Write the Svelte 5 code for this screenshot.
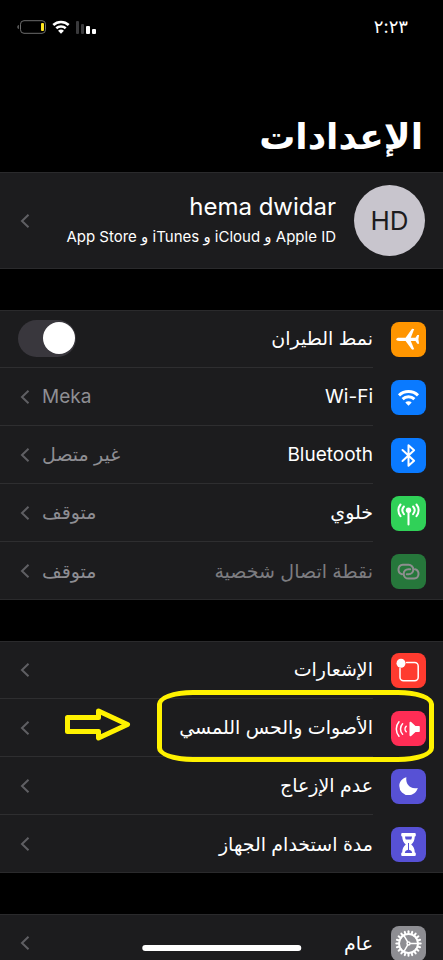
<script lang="ts">
  type Row = {
    icon: string
    label: string
    color: string
    value?: string
    toggle?: boolean
    dimmed?: boolean
    marked?: boolean
  }

  const groups: Row[][] = [
    [
      { icon: 'plane', label: 'نمط الطيران', color: 'orange', toggle: true },
      { icon: 'wifi', label: 'Wi-Fi', color: 'blue', value: 'Meka' },
      { icon: 'bluetooth', label: 'Bluetooth', color: 'blue', value: 'غير متصل' },
      { icon: 'cellular', label: 'خلوي', color: 'green', value: 'متوقف' },
      { icon: 'hotspot', label: 'نقطة اتصال شخصية', color: 'green', value: 'متوقف', dimmed: true },
    ],
    [
      { icon: 'notifications', label: 'الإشعارات', color: 'red' },
      { icon: 'sounds', label: 'الأصوات والحس اللمسي', color: 'pink', marked: true },
      { icon: 'moon', label: 'عدم الإزعاج', color: 'indigo' },
      { icon: 'hourglass', label: 'مدة استخدام الجهاز', color: 'indigo' },
    ],
    [{ icon: 'gear', label: 'عام', color: 'gray' }],
  ]

  let airplane = $state(false)

  const teeth = Array.from({ length: 20 }, (_, i) => i * 18)
</script>

{#snippet chevron()}
  <svg class="chevron" viewBox="0 0 10 16" aria-hidden="true">
    <path d="M8.5 1.8 2 8l6.5 6.2" />
  </svg>
{/snippet}

{#snippet glyph(name: string)}
  <svg viewBox="0 0 35 35" aria-hidden="true">
    {#if name === 'plane'}
      <path class="fill" d="M5.2 17.3c0-.9 1.2-1.6 3-1.6h6.4l6.1-8.4c.3-.4.7-.5 1.1-.4l1.400.2-3.400 8.600h4.700l1.800-2.800h1.800l-.7 4.400.7 4.400h-1.800l-1.800-2.800h-4.700l3.400 8.400-1.400.3c-.4.1-.8 0-1.100-.4l-6.100-8.300H8.200c-1.800 0-3-.7-3-1.600z" />
    {:else if name === 'wifi'}
      <path class="line thick" d="M8 15.3a13.800 13.800 0 0 1 19 0M11.600 19.200a8.500 8.500 0 0 1 11.800 0" />
      <path class="fill" d="M17.500 25.800l-3.200-3.300a4.500 4.500 0 0 1 6.400 0z" />
    {:else if name === 'bluetooth'}
      <path class="line" d="m11.500 12 11.600 10.700-5.600 5.100V7.200l5.600 5.100L11.500 23" />
    {:else if name === 'cellular'}
      <circle class="fill" cx="17.5" cy="14.3" r="2.7" />
      <path class="line" d="M17.500 15v13.500M12.900 10.500a6 6 0 0 0 0 7.700M22.100 10.500a6 6 0 0 1 0 7.700M9.500 8.500a9.200 9.200 0 0 0 0 11.700M25.500 8.500a9.200 9.200 0 0 1 0 11.700" />
    {:else if name === 'hotspot'}
      <path class="line" d="M11 20.200a4.800 4.800 0 0 1 .8-9.400h5.800a4.700 4.700 0 0 1 0 9.400h-1.800M24 15.200a4.800 4.800 0 0 1-.8 9.400h-5.800a4.700 4.700 0 0 1 0-9.400h1.800" />
    {:else if name === 'notifications'}
      <path class="line thin" d="M15.500 9.500h8.200a3.500 3.500 0 0 1 3.500 3.500v11.200a3.500 3.500 0 0 1-3.500 3.500H12.500A3.500 3.500 0 0 1 9 24.200V15.500" />
      <circle class="fill" cx="10" cy="10.2" r="4.5" />
    {:else if name === 'sounds'}
      <path class="fill" d="M18.500 11.800c0-1.100 1-1.400 1.700-.7l4.300 3.900h3.300c.6 0 1 .4 1 1v4c0 .6-.4 1-1 1h-3.300l-4.300 3.900c-.7.7-1.700.4-1.700-.7z" />
      <path class="line thin" d="M15.200 15.200a4 4 0 0 0 0 5.600M11.600 12.800a7.500 7.500 0 0 0 0 10.400M8 10.800a11 11 0 0 0 0 14.400" />
    {:else if name === 'moon'}
      <path class="fill" d="M15.400 8.200c-1.200 6.200 3.500 12.600 11.400 10.700-1.200 4.400-5 7.200-9.300 7.200a9.200 9.200 0 0 1-9.200-9.200c0-4 2.700-7.600 7.100-8.700z" />
    {:else if name === 'hourglass'}
      <path class="fill" d="M11.500 6h12c.8 0 1.300.5 1.300 1.300v1.200c0 .6-.4 1-1 1.100-.2 3.700-1.300 6-3.600 7.900 2.300 1.900 3.400 4.200 3.600 7.900.6.1 1 .5 1 1.100v1.200c0 .8-.5 1.300-1.300 1.300h-12c-.8 0-1.300-.5-1.300-1.300v-1.200c0-.6.4-1 1-1.100.2-3.700 1.300-6 3.600-7.900-2.300-1.900-3.400-4.200-3.600-7.900-.6-.1-1-.5-1-1.100V7.300c0-.8.500-1.300 1.300-1.300z" />
      <path class="cut" d="M14 9.500h7c-.1 1.200-.4 2.200-.8 3h-5.400c-.4-.8-.7-1.800-.8-3zM17 16h1v6.800c1.900.5 2.900 1.400 3.200 3.200h-7.400c.3-1.800 1.300-2.700 3.200-3.200z" />
    {:else if name === 'gear'}
      {#each teeth as angle}
        <path class="line" d="M17.500 5.300v2.500" transform="rotate({angle} 17.5 17.5)" />
      {/each}
      <circle class="line" cx="17.5" cy="17.5" r="9.5" />
      <circle class="line thin" cx="17.5" cy="17.5" r="1.5" />
      <path class="line thin" d="M19.500 17.500H27M16.500 15.700l-3.800-6.500M16.500 19.300l-3.800 6.500" />
    {/if}
  </svg>
{/snippet}

{#snippet badge(row: Row)}
  <span class="icon {row.color}">{@render glyph(row.icon)}</span>
{/snippet}

<div class="screen" dir="rtl" lang="ar">
  <header class="status">
    <time>٢:٢٣</time>
    <div class="indicators">
      <svg class="signal" viewBox="0 0 22 14" aria-hidden="true">
        <rect class="weak" x="1" y="1" width="3" height="13" rx="1" />
        <rect class="weak" x="6" y="4" width="3" height="10" rx="1" />
        <rect x="11" y="6" width="4" height="8" rx="1" />
        <rect x="17" y="9" width="4" height="5" rx="1" />
      </svg>
      <svg class="wifi" viewBox="0 0 18 14" aria-hidden="true">
        <path class="line" d="M1.300 5a11.200 11.200 0 0 1 15.400 0M4.300 8.300a7 7 0 0 1 9.400 0" />
        <path class="fill" d="m9 13.800-2.900-3a4 4 0 0 1 5.800 0z" />
      </svg>
      <svg class="battery" viewBox="0 0 30 14" aria-hidden="true">
        <rect class="case" x="3.5" y=".7" width="25" height="12.6" rx="3.5" />
        <path class="cap" d="M1.800 5v4C.7 8.700.4 8 .4 7s.3-1.700 1.400-2z" />
        <rect class="charge" x="24" y="3" width="3" height="8" rx="1" />
      </svg>
    </div>
  </header>

  <h1>الإعدادات</h1>

  <main>
    <a class="profile" href="#account">
      <span class="avatar">HD</span>
      <span class="who">
        <strong>hema dwidar</strong>
        <small>Apple ID و iCloud و iTunes و App Store</small>
      </span>
      {@render chevron()}
    </a>

    {#each groups as rows}
      <section class="group">
        {#each rows as row}
          {#if row.toggle}
            <label class="row">
              {@render badge(row)}
              <span class="body">
                <span class="label">{row.label}</span>
                <input type="checkbox" role="switch" bind:checked={airplane} />
              </span>
            </label>
          {:else}
            <a class="row" class:dimmed={row.dimmed} href="#{row.icon}">
              {@render badge(row)}
              <span class="body">
                <span class="label">{row.label}</span>
                {#if row.value}
                  <span class="value">{row.value}</span>
                {/if}
                {@render chevron()}
              </span>
              {#if row.marked}
                <span class="ring"></span>
                <svg class="arrow" viewBox="0 0 66 33" aria-hidden="true">
                  <path d="M2.500 9.500h31V3L62.500 16.500 33.500 30v-6.500h-31z" />
                </svg>
              {/if}
            </a>
          {/if}
        {/each}
      </section>
    {/each}
  </main>

  <div class="home"></div>
</div>

<style>
  :global(body) {
    margin: 0;
    background: #000;
  }

  .screen {
    position: relative;
    height: 100vh;
    overflow: hidden;
    background: #000;
    color: #fff;
    font-family: Inter, 'DejaVu Sans', sans-serif;
    font-size: 19px;
  }

  .status {
    display: flex;
    justify-content: space-between;
    align-items: center;
    height: 54px;
    padding: 0 35px 0 17px;
  }

  time {
    font-size: 18px;
    line-height: 20px;
  }

  .indicators {
    display: flex;
    gap: 5px;
  }

  .indicators svg {
    height: 14px;
    fill: #fff;
  }

  .signal {
    width: 22px;
  }

  .signal .weak {
    fill: #3a3a3c;
  }

  .wifi {
    width: 18px;
  }

  .battery {
    width: 30px;
  }

  .battery .case {
    fill: none;
    stroke: #6c6c6c;
  }

  .battery .cap {
    fill: #6c6c6c;
  }

  .battery .charge {
    fill: #ffe620;
  }

  h1 {
    margin: 0;
    padding: 54px 20px 0;
    height: 64px;
    font-size: 36px;
    line-height: 56px;
    font-weight: 700;
  }

  a {
    color: inherit;
    text-decoration: none;
  }

  .profile {
    display: flex;
    align-items: center;
    gap: 18px;
    height: 97px;
    padding: 0 18px 0 20px;
    box-sizing: border-box;
    background: #1c1c1e;
    box-shadow: inset 0 1px #2a2a2c, inset 0 -1px #2a2a2c;
  }

  .avatar {
    display: grid;
    place-content: center;
    width: 71px;
    height: 71px;
    border-radius: 50%;
    background: #c8c5cd;
    color: #1c1c1e;
    font-size: 26px;
  }

  .who {
    flex: 1;
    display: flex;
    flex-direction: column;
  }

  .who strong {
    font-size: 24px;
    line-height: 32px;
    font-weight: 400;
  }

  .who small {
    font-size: 15px;
    line-height: 28px;
  }

  .group {
    margin-top: 41px;
    background: #1c1c1e;
    box-shadow: inset 0 1px #2a2a2c, inset 0 -1px #2a2a2c;
  }

  .row {
    position: relative;
    display: flex;
    align-items: center;
    gap: 18px;
    height: 58px;
    padding-right: 17px;
  }

  .icon {
    flex: none;
    width: 35px;
    height: 35px;
    border-radius: 8px;
  }

  .icon svg {
    display: block;
  }

  .orange {
    background: #ff9500;
  }

  .blue {
    background: #0a7aff;
  }

  .green {
    background: #30d158;
  }

  .red {
    background: #ff3b2f;
  }

  .pink {
    background: #ff2d55;
  }

  .indigo {
    background: #5751d5;
  }

  .gray {
    background: #8e8e93;
  }

  .fill {
    fill: #fff;
  }

  .cut {
    fill: #5751d5;
  }

  .line {
    fill: none;
    stroke: #fff;
    stroke-width: 2;
    stroke-linecap: round;
    stroke-linejoin: round;
  }

  .line.thick {
    stroke-width: 3;
    stroke-linecap: butt;
  }

  .line.thin {
    stroke-width: 1.5;
  }

  .wifi .line {
    stroke-width: 2.6;
    stroke-linecap: butt;
  }

  .body {
    flex: 1;
    display: flex;
    align-items: center;
    gap: 12px;
    height: 100%;
    padding-left: 20px;
    box-sizing: border-box;
    border-bottom: 1px solid #2e2e30;
  }

  .row:last-child .body {
    border-bottom: 0;
  }

  .label {
    flex: 1;
  }

  .value {
    color: #8e8e93;
  }

  .dimmed .label {
    color: #7c7c80;
  }

  .dimmed .icon {
    opacity: 0.5;
  }

  .chevron {
    flex: none;
    width: 10px;
    height: 16px;
    fill: none;
    stroke: #5f5f63;
    stroke-width: 2;
  }

  input {
    appearance: none;
    width: 58px;
    height: 37px;
    margin: 0 0 0 -2px;
    padding: 2px 1px;
    box-sizing: border-box;
    border-radius: 19px;
    background: #39373d;
  }

  input::before {
    content: '';
    display: block;
    width: 32px;
    height: 32px;
    border-radius: 50%;
    background: #fff;
  }

  input:checked {
    background: #30d158;
  }

  input:checked::before {
    margin-right: auto;
  }

  .ring {
    position: absolute;
    top: -9px;
    right: 9px;
    width: 277px;
    height: 72px;
    box-sizing: border-box;
    border: 5px solid #fff200;
    border-radius: 36px / 14px;
    pointer-events: none;
  }

  .arrow {
    position: absolute;
    top: 9px;
    left: 65px;
    width: 66px;
    height: 33px;
    fill: none;
    stroke: #fff200;
    stroke-width: 5;
    stroke-linejoin: round;
  }

  .home {
    position: absolute;
    bottom: 9px;
    left: 50%;
    width: 36%;
    height: 6px;
    border-radius: 3px;
    background: #fff;
    transform: translateX(-50%);
  }
</style>
